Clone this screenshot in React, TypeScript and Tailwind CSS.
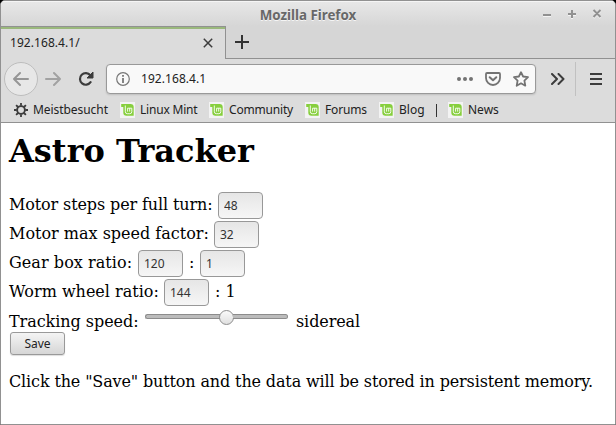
import React from "react";

function MintIcon() {
  return (
    <svg className="block h-4 w-[15px] shrink-0" viewBox="0 0 15 16" fill="none">
      <rect width="15" height="16" fill="#f3f3f3" />
      <path d="M1.2 2H10.5Q13.7 2 13.7 5V13.7H6.5Q3.3 13.7 3.3 10.5V5H1.2Z" fill="#87cf3e" />
      <path d="M5.3 3.5V9.4Q5.3 11.7 7.3 11.7H9.8Q11.8 11.7 11.8 9.6V6.2H7.6V9.6M9.7 6.2V9.6" stroke="#fff" strokeWidth="0.9" />
    </svg>
  );
}

function Bookmark({ label, width, tracking = "" }: { label: string; width: string; tracking?: string }) {
  return (
    <div className={`flex h-4 shrink-0 items-center gap-[5px] whitespace-nowrap ${width}`}>
      <MintIcon />
      <span className={tracking}>{label}</span>
    </div>
  );
}

function TitleBar() {
  return (
    <header className="flex h-[25px] shrink-0 items-center bg-linear-to-b from-[#e8e8e8] to-[#d6d6d6] shadow-[inset_0_1px_0_#f5f5f5]">
      <div className="w-[75px] shrink-0" />
      <h2 className="flex-1 pt-[3px] text-center text-[13.33px] leading-5 font-bold text-[#686868] [text-shadow:0_1px_0_#f5f5f5]">Mozilla Firefox</h2>
      <svg className="h-[25px] w-[75px] shrink-0" viewBox="0 0 75 25" fill="none" strokeWidth="2">
        <path d="M3 15H11M28 14H36M32 10V18M53.5 10L60.5 17M60.5 10L53.5 17" stroke="#f4f4f4" />
        <path d="M3 14H11M28 13H36M32 9V17M53.5 9L60.5 16M60.5 9L53.5 16" stroke="#919191" />
      </svg>
    </header>
  );
}

function TabBar() {
  return (
    <div className="flex h-[33px] shrink-0 bg-[#d6d6d6]">
      <div className="flex w-[225px] items-center justify-between border-t border-r border-[#919191] bg-[#dcdcdc] shadow-[inset_0_2px_0_#9ab87c]">
        <span className="pl-[9px] text-[12px] tracking-[0.06px]">192.168.4.1/</span>
        <svg className="mr-[12px] size-[10px]" viewBox="0 0 10 10" fill="none">
          <path d="M.8 .8L9.2 9.2M9.2 .8L.8 9.2" stroke="#3c3c3c" strokeWidth="1.5" />
        </svg>
      </div>
      <div className="flex-1 border-b border-[#919191] pt-[9px] pl-[9px]">
        <svg className="size-[14px]" viewBox="0 0 14 14" fill="none">
          <path d="M0 7H14M7 0V14" stroke="#333" strokeWidth="2" />
        </svg>
      </div>
    </div>
  );
}

function NavBar() {
  return (
    <nav className="flex h-[39px] shrink-0 items-center bg-[#dcdcdc]">
      <button className="ml-[3px] flex size-[34px] items-center justify-center rounded-full border border-[#bdbdbd] bg-[#e7e7e7]">
        <svg className="size-4" viewBox="0 0 16 16" fill="none" stroke="#969696" strokeWidth="2" strokeLinecap="round" strokeLinejoin="round">
          <path d="M1 8H15M7 2L1 8L7 14" />
        </svg>
      </button>
      <svg className="ml-[7px] size-4" viewBox="0 0 16 16" fill="none" stroke="#a2a2a2" strokeWidth="2" strokeLinecap="round" strokeLinejoin="round">
        <path d="M1 8H15M9 2L15 8L9 14" />
      </svg>
      <svg className="ml-[17px] size-4" viewBox="0 0 16 16" fill="none">
        <path d="M12.6 11.2A5.8 5.8 0 1 1 12.3 4.3" stroke="#3c3c3c" strokeWidth="2.2" strokeLinecap="round" />
        <path d="M15 1V7H9Z" fill="#3c3c3c" stroke="#3c3c3c" strokeLinejoin="round" />
      </svg>
      <div className="ml-[12px] flex h-[30px] w-[430px] items-center rounded-[4px] border border-[#999] bg-[#f9f9f9] shadow-[0_1px_2px_#0002]">
        <svg className="ml-[9px] size-[14px]" viewBox="0 0 14 14" fill="none" stroke="#777">
          <circle cx="7" cy="7" r="6.3" strokeWidth="1.2" />
          <path d="M7 6V11M7 3V4.8" strokeWidth="1.8" />
        </svg>
        <span className="ml-[11px] flex-1 text-[12px] tracking-[0.06px]">192.168.4.1</span>
        <svg className="size-4" viewBox="0 0 16 16" fill="#737373">
          <circle cx="2" cy="8" r="2" />
          <circle cx="8" cy="8" r="2" />
          <circle cx="14" cy="8" r="2" />
        </svg>
        <svg className="ml-[12px] size-4" viewBox="0 0 16 16" fill="none" stroke="#737373" strokeLinecap="round" strokeLinejoin="round">
          <path d="M2 2H14Q15 2 15 3V7A7 7 0 0 1 1 7V3Q1 2 2 2Z" strokeWidth="1.8" />
          <path d="M4.7 6.2L8 9.3L11.3 6.2" strokeWidth="2" />
        </svg>
        <svg className="mr-[6px] ml-[12px] size-4" viewBox="0 0 16 16" fill="none" stroke="#737373">
          <path d="M8 1.2L10.1 5.5L15 6.2L11.4 9.6L12.3 14.7L8 12.3L3.7 14.7L4.6 9.6L1 6.2L5.9 5.5Z" strokeWidth="1.8" strokeLinejoin="round" />
        </svg>
      </div>
      <svg className="ml-[15px] h-[12px] w-[14px]" viewBox="0 0 14 12" fill="none" stroke="#3c3c3c" strokeWidth="2">
        <path d="M1 1L6 6L1 11M7.5 1L12.5 6L7.5 11" strokeLinecap="round" strokeLinejoin="round" />
      </svg>
      <div className="ml-[10px] h-[34px] w-px bg-[#c1c1c1]" />
      <svg className="ml-[14px] size-[12px]" viewBox="0 0 12 12" fill="none" stroke="#3c3c3c" strokeWidth="2">
        <path d="M0 1H12M0 6H12M0 11H12" />
      </svg>
    </nav>
  );
}

function BookmarkBar() {
  return (
    <div className="flex h-[25px] shrink-0 items-center border-b border-[#919191] bg-[#dcdcdc] pl-[13px] text-[12px]">
      <svg className="size-[14px] shrink-0" viewBox="0 0 14 14" fill="none" stroke="#3c3c3c">
        <circle cx="7" cy="7" r="3.9" strokeWidth="1.9" />
        <path d="M7 0V2.7M7 11.3V14M0 7H2.7M11.3 7H14M2.1 2.1L4 4M10 10L11.9 11.9M2.1 11.9L4 10M10 4L11.9 2.1" strokeWidth="1.8" />
      </svg>
      <span className="ml-[5px] w-[87px] shrink-0 tracking-[-0.06px]">Meistbesucht</span>
      <Bookmark label="Linux Mint" width="w-[89px]" tracking="tracking-[-0.2px]" />
      <Bookmark label="Community" width="w-[96px]" tracking="tracking-[-0.18px]" />
      <Bookmark label="Forums" width="w-[74px]" tracking="tracking-[-0.15px]" />
      <Bookmark label="Blog" width="w-[57px]" />
      <div className="mr-[11px] h-[13px] w-px bg-[#333]" />
      <Bookmark label="News" width="w-[60px]" />
    </div>
  );
}

function NumberField({ value }: { value: string }) {
  return (
    <input
      defaultValue={value}
      className="h-[27px] w-[45px] shrink-0 rounded-[4px] border border-[#989898] bg-linear-to-b from-[#e6e6e6] to-[#f6f6f6] px-[5px] font-['Noto_Sans',sans-serif] text-[12px] text-[#333]"
    />
  );
}

function Label({ width, tracking = "", children }: { width: string; tracking?: string; children: React.ReactNode }) {
  return <span className={`shrink-0 pb-[2px] ${width} ${tracking}`}>{children}</span>;
}

function Row({ children }: { children: React.ReactNode }) {
  return <div className="flex h-[29px] items-center whitespace-nowrap">{children}</div>;
}

export default function App() {
  return (
    <div className="bg-black">
      <div className="flex h-[425px] w-[616px] flex-col overflow-hidden rounded-t-[5px] border border-[#919191] bg-white font-['Noto_Sans',sans-serif] text-[#222]">
        <TitleBar />
        <TabBar />
        <NavBar />
        <BookmarkBar />
        <main className="flex flex-1 flex-col pl-2 font-['DejaVu_Serif',serif] text-[16px] leading-[19px] text-black">
          <h1 className="mt-[9px] h-[59px] text-[32px] leading-[38px] font-bold">Astro Tracker</h1>
          <Row>
            <Label width="w-[209px]" tracking="tracking-[-0.12px]">Motor steps per full turn:</Label>
            <NumberField value="48" />
          </Row>
          <Row>
            <Label width="w-[205px]">Motor max speed factor:</Label>
            <NumberField value="32" />
          </Row>
          <Row>
            <Label width="w-[129px]" tracking="tracking-[0.06px]">Gear box ratio:</Label>
            <NumberField value="120" />
            <Label width="w-[17px] pl-[6px]">:</Label>
            <NumberField value="1" />
          </Row>
          <Row>
            <Label width="w-[155px]">Worm wheel ratio:</Label>
            <NumberField value="144" />
            <Label width="w-[30px] pl-[6px]">: 1</Label>
          </Row>
          <div className="flex h-[25px] items-start">
            <span className="w-[136px] pt-[5px] tracking-[-0.05px] whitespace-nowrap">Tracking speed:</span>
            <div className="mt-[3px] flex h-[15px] w-[143px] items-center">
              <div className="mb-[2px] h-[5px] w-[75px] rounded-l-full border border-r-0 border-[#8c8c8c] bg-[#bcbcbc]" />
              <div className="-mx-px size-[15px] shrink-0 rounded-full border border-[#8c8c8c] bg-linear-to-b from-[#fafafa] to-[#e0e0e0]" />
              <div className="mb-[2px] h-[5px] flex-1 rounded-r-full border border-l-0 border-[#8c8c8c] bg-[#bcbcbc]" />
            </div>
            <span className="ml-[8px] pt-[5px] tracking-[-0.1px]">sidereal</span>
          </div>
          <button className="ml-px h-[23px] w-[55px] rounded-[3px] border border-[#999] bg-linear-to-b from-[#f4f4f4] to-[#d6d6d6] font-['Noto_Sans',sans-serif] text-[12px] leading-[21px] tracking-[-0.1px] text-[#222] shadow-[0_1px_1px_#0002]">Save</button>
          <p className="mt-[17px] tracking-[-0.137px] whitespace-nowrap">Click the "Save" button and the data will be stored in persistent memory.</p>
        </main>
      </div>
    </div>
  );
}
